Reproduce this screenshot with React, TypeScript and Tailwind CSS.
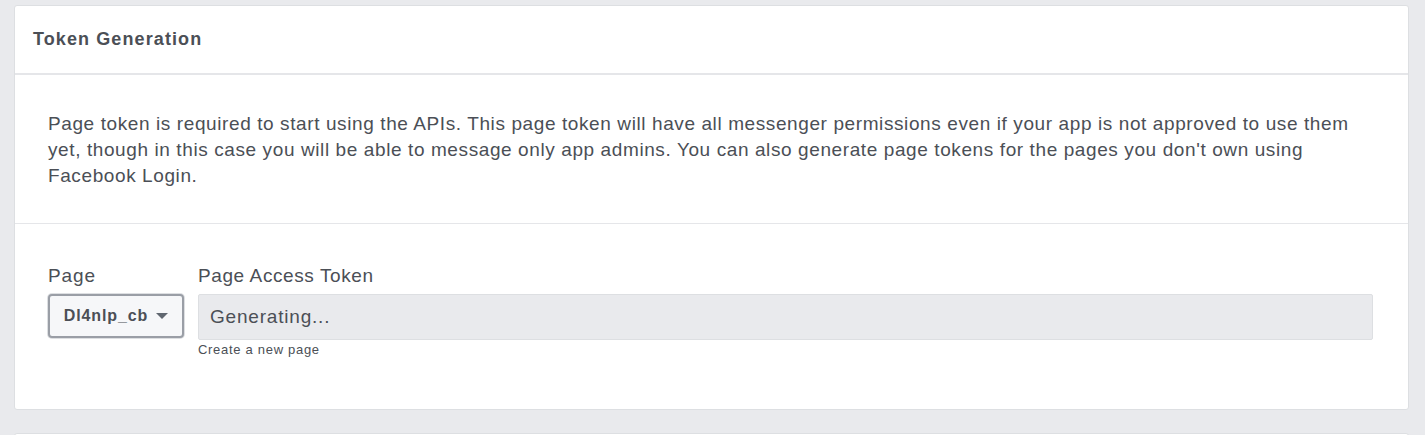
export default function App() {
  return (
    <div className="w-[1425px] h-[435px] overflow-hidden bg-[#e9eaed] pt-[5px] pl-[14px] pr-[16px] font-['Liberation_Sans',Arial,sans-serif] text-[#4b4f56]">
      <div className="bg-white border border-[#dddfe2] rounded-[3px]">
        {/* Header */}
        <div className="h-[69px] flex items-center pl-[18px] border-b-2 border-[#e5e6e9]">
          <h2 className="text-[18px] font-bold tracking-[1.1px] text-[#4b4f56]">Token Generation</h2>
        </div>

        {/* Description */}
        <div className="pl-[33px] pr-[20px] pt-[36px] pb-[34px] border-b border-[#e5e6e9]">
          <p className="text-[19px] leading-[26px] tracking-[0.6px] whitespace-nowrap text-[#4b4f56]">
            Page token is required to start using the APIs. This page token will have all messenger permissions even if your app is not approved to use them
            <br />
            yet, though in this case you will be able to message only app admins. You can also generate page tokens for the pages you don't own using
            <br />
            Facebook Login.
          </p>
        </div>

        {/* Form */}
        <div className="pl-[33px] pr-[35px] pt-[41px] pb-[51px] flex gap-[14px]">
          <div className="flex flex-col">
            <label className="text-[19px] leading-[22px] tracking-[0.9px] mb-[7px]">Page</label>
            <button className="h-[44px] w-[136px] flex items-center justify-center gap-[8px] bg-[#f6f7f9] border-2 border-[#9a9ea6] rounded-[4px] shadow-[0_0_0_1px_#dddfe2] text-[16px] font-bold tracking-[0.9px] text-[#4b4f56]">
              Dl4nlp_cb
              <span className="w-0 h-0 border-l-[6px] border-r-[6px] border-t-[6px] border-l-transparent border-r-transparent border-t-[#606770]" />
            </button>
          </div>
          <div className="flex flex-col flex-1">
            <label className="text-[19px] leading-[22px] tracking-[0.6px] mb-[7px]">Page Access Token</label>
            <div className="h-[46px] bg-[#e9eaed] border border-[#dddfe2] rounded-[2px] flex items-center px-[11px] text-[19px] tracking-[0.8px] text-[#4b4f56]">
              Generating...
            </div>
            <span className="text-[13px] leading-[16px] tracking-[0.7px] mt-[2px] text-[#4b4f56]">Create a new page</span>
          </div>
        </div>
      </div>
      <div className="mt-[23px] h-[20px] bg-white border border-[#dddfe2] rounded-[3px]" />
    </div>
  );
}
